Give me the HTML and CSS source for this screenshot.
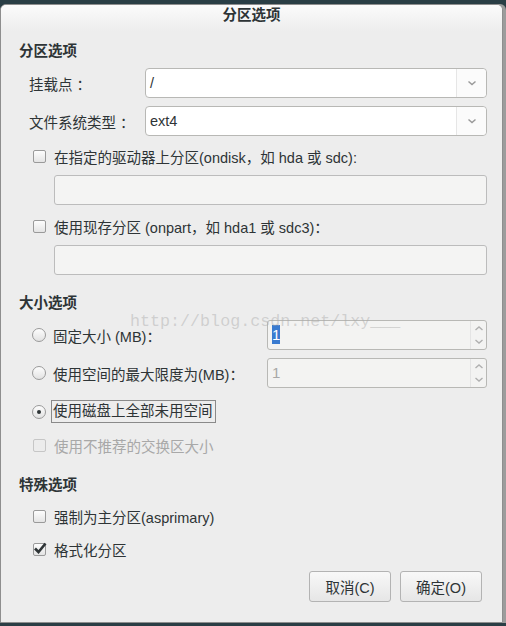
FILE: index.html
```html
<!DOCTYPE html>
<html lang="zh-CN">
<head>
  <meta charset="UTF-8">
  <title>分区选项</title>
  <link rel="stylesheet" href="styles.css">
</head>
<body>
  <div class="dialog">
    <div class="titlebar">分区选项</div>

    <div class="content">
      <h2 class="section">分区选项</h2>

      <div class="form-row">
        <span class="label">挂载点 ：</span>
        <div class="combo"><span class="combo-text">/</span><span class="combo-btn"><svg width="10" height="6" viewBox="0 0 10 6"><path d="M1.5 1.5 L5 4.5 L8.5 1.5" fill="none" stroke="#9a9a9a" stroke-width="1.5"/></svg></span></div>
      </div>
      <div class="form-row">
        <span class="label">文件系统类型 ：</span>
        <div class="combo"><span class="combo-text">ext4</span><span class="combo-btn"><svg width="10" height="6" viewBox="0 0 10 6"><path d="M1.5 1.5 L5 4.5 L8.5 1.5" fill="none" stroke="#9a9a9a" stroke-width="1.5"/></svg></span></div>
      </div>

      <div class="check-row first"><span class="box"></span>在指定的驱动器上分区(ondisk，如 hda 或 sdc):</div>
      <div class="entry"></div>
      <div class="check-row"><span class="box"></span>使用现存分区 (onpart，如 hda1 或 sdc3)：</div>
      <div class="entry"></div>

      <h2 class="section size">大小选项</h2>

      <div class="radio-row">
        <span class="radio"></span><span class="radio-label">固定大小 (MB)：</span>
        <div class="spin"><span class="spin-text"><span class="selected">1</span></span><span class="spin-btn"><svg width="10" height="24" viewBox="0 0 10 24"><path d="M1.5 7 L5 4 L8.5 7" fill="none" stroke="#b0b0b0" stroke-width="1.4"/><path d="M1.5 17 L5 20 L8.5 17" fill="none" stroke="#b0b0b0" stroke-width="1.4"/></svg></span></div>
      </div>
      <div class="radio-row">
        <span class="radio"></span><span class="radio-label">使用空间的最大限度为(MB)：</span>
        <div class="spin"><span class="spin-text muted">1</span><span class="spin-btn"><svg width="10" height="24" viewBox="0 0 10 24"><path d="M1.5 7 L5 4 L8.5 7" fill="none" stroke="#b0b0b0" stroke-width="1.4"/><path d="M1.5 17 L5 20 L8.5 17" fill="none" stroke="#b0b0b0" stroke-width="1.4"/></svg></span></div>
      </div>
      <div class="radio-row short">
        <span class="radio on"></span><span class="radio-label focus">使用磁盘上全部未用空间</span>
      </div>
      <div class="check-row disabled"><span class="box"></span>使用不推荐的交换区大小</div>

      <h2 class="section special">特殊选项</h2>

      <div class="check-row"><span class="box"></span>强制为主分区(asprimary)</div>
      <div class="check-row format"><span class="box checked"><svg width="14" height="13" viewBox="0 0 14 13"><path d="M2 6.5 L5.5 10 L12.5 1.5" fill="none" stroke="#2e3436" stroke-width="2.6"/></svg></span>格式化分区</div>

      <div class="buttons">
        <button class="btn">取消(C)</button>
        <button class="btn">确定(O)</button>
      </div>
    </div>

    <div class="watermark">http://blog.csdn.net/lxy___</div>
  </div>
</body>
</html>
```

FILE: styles.css
```css
body { margin: 0; background: #2a3e45; font-family: "Liberation Sans", "Noto Sans CJK SC", sans-serif; font-size: 14.5px; color: #2e3436; }

.dialog { position: relative; margin-top: 4px; width: 501px; height: 617px; background: #ededed; border: 1px solid #8e8e8e; border-radius: 6px 6px 0 0; box-shadow: 3px 0 0 #9c9c9c; overflow: hidden; }
.titlebar { height: 26px; line-height: 21px; text-align: center; font-weight: bold; background: linear-gradient(#fbfbfb, #ededed); }

.content { padding: 0 15px 0 18px; }
.section { margin: 0; height: 20px; line-height: 20px; font-size: 14.5px; font-weight: bold; padding-top: 10px; }
.section.size { padding-top: 18px; }
.section.special { padding-top: 20px; }

.form-row { display: grid; grid-template-columns: 126px 1fr; align-items: center; margin-top: 7px; }
.form-row + .form-row { margin-top: 8px; }
.label { padding-left: 10px; }
.combo { display: flex; height: 28px; background: #fff; border: 1px solid #b8b8b5; border-radius: 4px; }
.combo-text { flex: 1; line-height: 28px; padding-left: 4px; }
.combo-btn { width: 29px; display: flex; align-items: center; justify-content: center; border-left: 1px solid #e6e6e6; background: #fbfbfb; border-radius: 0 4px 4px 0; }

.check-row { display: flex; align-items: center; height: 20px; margin-top: 11px; padding-left: 14px; }
.check-row.first { margin-top: 10px; }
.check-row.disabled { color: #a8a8a8; margin-top: 12px; }
.check-row.format { margin-top: 13px; }
.box { width: 11px; height: 11px; border: 1px solid #9a9a9a; border-radius: 2px; background: linear-gradient(#fdfdfd, #e4e4e4); margin-right: 8px; position: relative; }
.check-row.disabled .box { border-color: #c6c6c6; background: #ececec; }
.box.checked svg { position: absolute; left: -1px; top: -2px; }

.entry { margin: 9px 0 0 35px; height: 28px; background: #f4f4f3; border: 1px solid #bcbcbc; border-radius: 3px; }

.radio-row { display: flex; align-items: center; height: 30px; margin-top: 7px; padding-left: 13px; }
.radio-row + .radio-row { margin-top: 8px; }
.radio-row.short { height: 23px; margin-top: 12px; }
.radio { width: 12px; height: 12px; border: 1px solid #9a9a9a; border-radius: 50%; background: linear-gradient(#fdfdfd, #e2e2e2); margin-right: 7px; position: relative; }
.radio.on::after { content: ""; position: absolute; left: 4px; top: 4px; width: 4px; height: 4px; border-radius: 50%; background: #2e3436; }
.radio-label { width: 214px; }
.radio-label.focus { width: auto; border: 1px solid #8a8a8a; padding: 0 2px 0 1px; line-height: 21px; margin-left: -2px; }
.spin { flex: 1; display: flex; height: 28px; background: #f3f3f2; border: 1px solid #b8b8b5; border-radius: 3px; }
.spin-text { flex: 1; line-height: 28px; padding-left: 4px; font-size: 15px; }
.spin-text.muted { color: #a8a8a8; }
.selected { background: #3a7bd0; color: #fff; padding: 1px 0; }
.spin-btn { width: 15px; display: flex; align-items: center; justify-content: center; border-left: 1px solid #e4e4e4; }

.buttons { display: flex; justify-content: flex-end; gap: 9px; margin-top: 12px; padding-right: 5px; }
.btn { width: 82px; height: 31px; font: inherit; color: #2e3436; border: 1px solid #b3b3b3; border-radius: 3px; background: linear-gradient(#f8f8f8, #e6e6e6); padding: 0; }

.watermark { position: absolute; left: 129px; top: 307px; font-family: "Liberation Mono", monospace; font-size: 16.7px; color: rgba(170, 170, 170, 0.45); pointer-events: none; }
```
